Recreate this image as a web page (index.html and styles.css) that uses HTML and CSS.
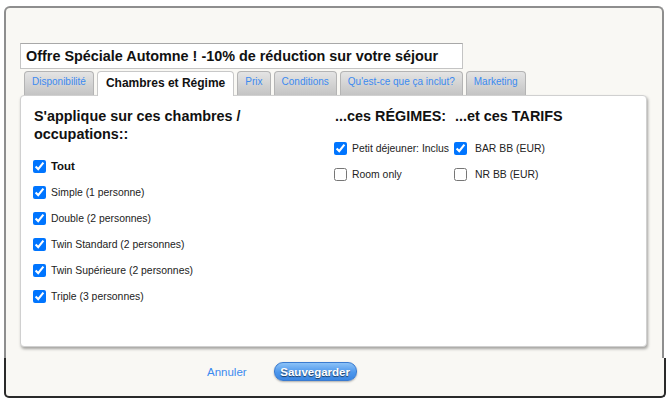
FILE: index.html
```html
<!DOCTYPE html>
<html lang="fr">
<head>
<meta charset="utf-8">
<title>Offre Spéciale</title>
<link rel="stylesheet" href="styles.css">
</head>
<body>
<div class="dialog">
  <div class="dialog-body">
    <div class="title-box">Offre Spéciale Automne ! -10% de réduction sur votre séjour</div>
    <div class="tabs">
      <div class="tab">Disponibilité</div>
      <div class="tab active">Chambres et Régime</div>
      <div class="tab">Prix</div>
      <div class="tab">Conditions</div>
      <div class="tab">Qu'est-ce que ça inclut?</div>
      <div class="tab">Marketing</div>
    </div>
    <div class="panel">
      <div class="col col-rooms">
        <h3 class="col-title">S'applique sur ces chambres / occupations::</h3>
        <label class="row bold"><input type="checkbox" checked><span>Tout</span></label>
        <label class="row"><input type="checkbox" checked><span>Simple (1 personne)</span></label>
        <label class="row"><input type="checkbox" checked><span>Double (2 personnes)</span></label>
        <label class="row"><input type="checkbox" checked><span>Twin Standard (2 personnes)</span></label>
        <label class="row"><input type="checkbox" checked><span>Twin Supérieure (2 personnes)</span></label>
        <label class="row"><input type="checkbox" checked><span>Triple (3 personnes)</span></label>
      </div>
      <div class="col col-boards">
        <h3 class="col-title">...ces RÉGIMES:</h3>
        <label class="row"><input type="checkbox" checked><span>Petit déjeuner: Inclus</span></label>
        <label class="row"><input type="checkbox"><span>Room only</span></label>
      </div>
      <div class="col col-rates">
        <h3 class="col-title">...et ces TARIFS</h3>
        <label class="row wide"><input type="checkbox" checked><span>BAR BB (EUR)</span></label>
        <label class="row wide"><input type="checkbox"><span>NR BB (EUR)</span></label>
      </div>
    </div>
  </div>
  <div class="dialog-footer">
    <a class="cancel" href="#">Annuler</a>
    <button class="save" type="button">Sauvegarder</button>
  </div>
</div>
</body>
</html>
```

FILE: styles.css
```css
* { box-sizing: border-box; }
html, body { margin: 0; padding: 0; background: #ffffff; }
body {
  font-family: "Liberation Sans", Arial, sans-serif;
  color: #222;
  width: 670px;
  height: 400px;
  overflow: hidden;
}
.dialog {
  margin: 6px 0 0 4px;
  width: 660px;
}
.dialog-body {
  background: #f9f8f4;
  border: 2px solid #8e8e8e;
  border-bottom: none;
  border-radius: 6px 6px 0 0;
  padding: 35px 0 11px 14px;
}
.title-box {
  width: 443px;
  height: 26px;
  background: #fff;
  border: 1px solid #c4c4c4;
  border-top-color: #a8a8a8;
  font-size: 14.4px;
  font-weight: bold;
  color: #111;
  padding: 4px 0 0 5px;
  white-space: nowrap;
}
.tabs {
  display: flex;
  gap: 3px;
  margin-top: 2px;
  padding-left: 4px;
  height: 24px;
  position: relative;
  z-index: 2;
}
.tab {
  height: 24px;
  padding: 4px 7px 0;
  font-size: 10px;
  color: #3b8af0;
  background: linear-gradient(#e4e4e4, #c4c4c4);
  border: 1px solid #b4b4b4;
  border-bottom: none;
  border-radius: 4px 4px 0 0;
  white-space: nowrap;
}
.tab.active {
  height: 25px;
  background: #fff;
  color: #111;
  font-weight: bold;
  font-size: 12px;
  padding: 4px 8px 0;
  border-color: #c8c8c8;
}
.panel {
  width: 627px;
  height: 252px;
  background: #fff;
  border: 1px solid #d0d0d0;
  border-radius: 4px;
  box-shadow: 1px 2px 3px rgba(0,0,0,0.35);
  display: flex;
  padding: 11px 0 0 13px;
}
.col { display: flex; flex-direction: column; }
.col-rooms { width: 301px; }
.col-boards { width: 120px; }
.col-rates { width: 150px; }
.col-title {
  margin: 0 0 10px;
  font-size: 14.4px;
  line-height: 18px;
  font-weight: bold;
  color: #111;
}
.col-rooms .col-title { width: 250px; }
.row {
  display: flex;
  align-items: center;
  height: 26px;
  font-size: 10.4px;
  color: #222;
  white-space: nowrap;
}
.row input {
  margin: 0 5px 0 -1px;
  width: 13px;
  height: 13px;
}
.row.wide input { margin-right: 8px; }
.row.bold { font-weight: bold; font-size: 11.4px; color: #111; }
.dialog-footer {
  margin-right: -2px;
  height: 40px;
  border: 2px solid #2a2a2a;
  border-top: none;
  border-radius: 0 0 5px 5px;
  background: #f9f8f4;
  display: flex;
  align-items: flex-start;
  padding: 4px 0 0 201px;
}
.cancel {
  font-size: 11.5px;
  color: #3b8af0;
  text-decoration: none;
  line-height: 19px;
  margin-top: 1px;
}
.save {
  margin-left: 27px;
  width: 83px;
  height: 19px;
  padding: 0;
  border: 1px solid #3a7bd0;
  border-radius: 9px;
  background: linear-gradient(#8cc2f7, #4d97ec 55%, #3a86e2);
  color: #fff;
  font-family: "Liberation Sans", Arial, sans-serif;
  font-size: 11.5px;
  font-weight: bold;
  text-shadow: 0 1px 1px rgba(0,0,0,0.6);
  box-shadow: 0 1px 2px rgba(0,0,0,0.3);
}
```
